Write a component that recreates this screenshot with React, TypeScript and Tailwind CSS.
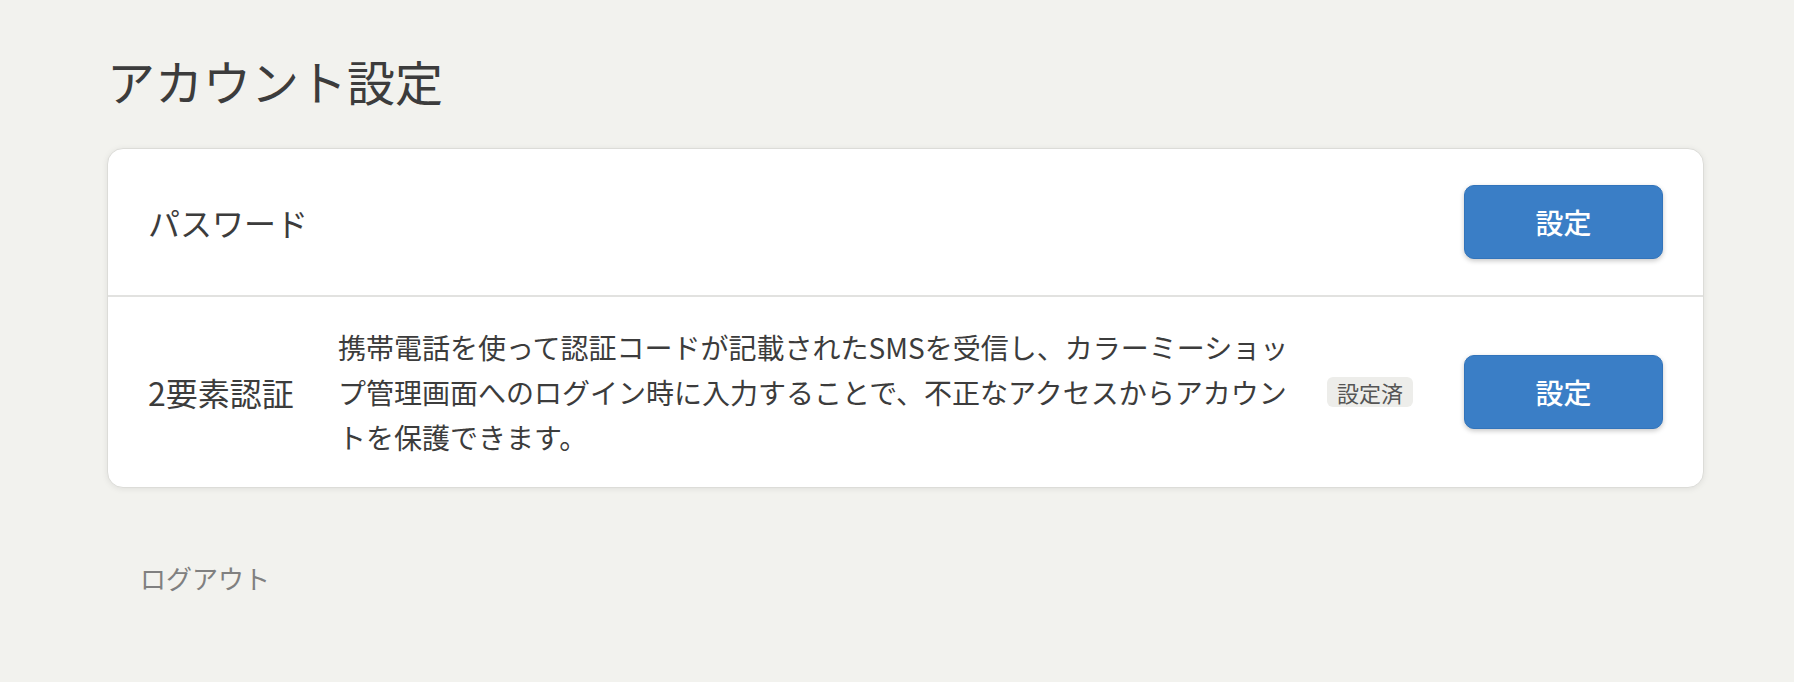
import React from "react";

const font = { fontFamily: '"Noto Sans CJK JP", "Noto Sans", sans-serif' };

function SetButton() {
  return (
    <button className="ml-[51px] flex h-[74px] w-[199px] shrink-0 items-center justify-center rounded-[10px] border border-[#3274bb] bg-[#3a7ec6] text-[28px] font-medium text-white shadow-[0_2px_5px_rgba(0,0,0,0.22)]">
      設定
    </button>
  );
}

export default function App() {
  return (
    <div className="min-h-screen bg-[#f2f2ee] pl-[107px] pr-[90px] pt-[44px] text-[#3c3c3c]" style={font}>
      <h1 className="text-[48px] font-normal leading-[72px]">アカウント設定</h1>

      <div className="mt-[32px] rounded-[16px] border border-[#dcdcd8] bg-white shadow-[0_1px_6px_rgba(0,0,0,0.08)]">
        <div className="flex items-center px-10 py-[36px]">
          <div className="w-[190px] shrink-0 text-[32px] leading-[1.5]">パスワード</div>
          <div className="flex-1" />
          <SetButton />
        </div>

        <div className="border-t-2 border-[#e2e2e0]" />

        <div className="flex items-center px-10 py-7">
          <div className="w-[190px] shrink-0 text-[32px] leading-[1.5]">2要素認証</div>
          <p className="flex-1 text-[28px] leading-[1.6]">
            携帯電話を使って認証コードが記載されたSMSを受信し、カラーミーショップ管理画面へのログイン時に入力することで、不正なアクセスからアカウントを保護できます。
          </p>
          <span className="ml-[29px] flex h-[30px] w-[86px] shrink-0 items-center justify-center rounded-[6px] bg-[#ededea] text-[22px] text-[#555555]">
            設定済
          </span>
          <SetButton />
        </div>
      </div>

      <button className="ml-[33px] mt-[70px] text-[26px] leading-[1.5] text-[#808080]">ログアウト</button>
    </div>
  );
}
